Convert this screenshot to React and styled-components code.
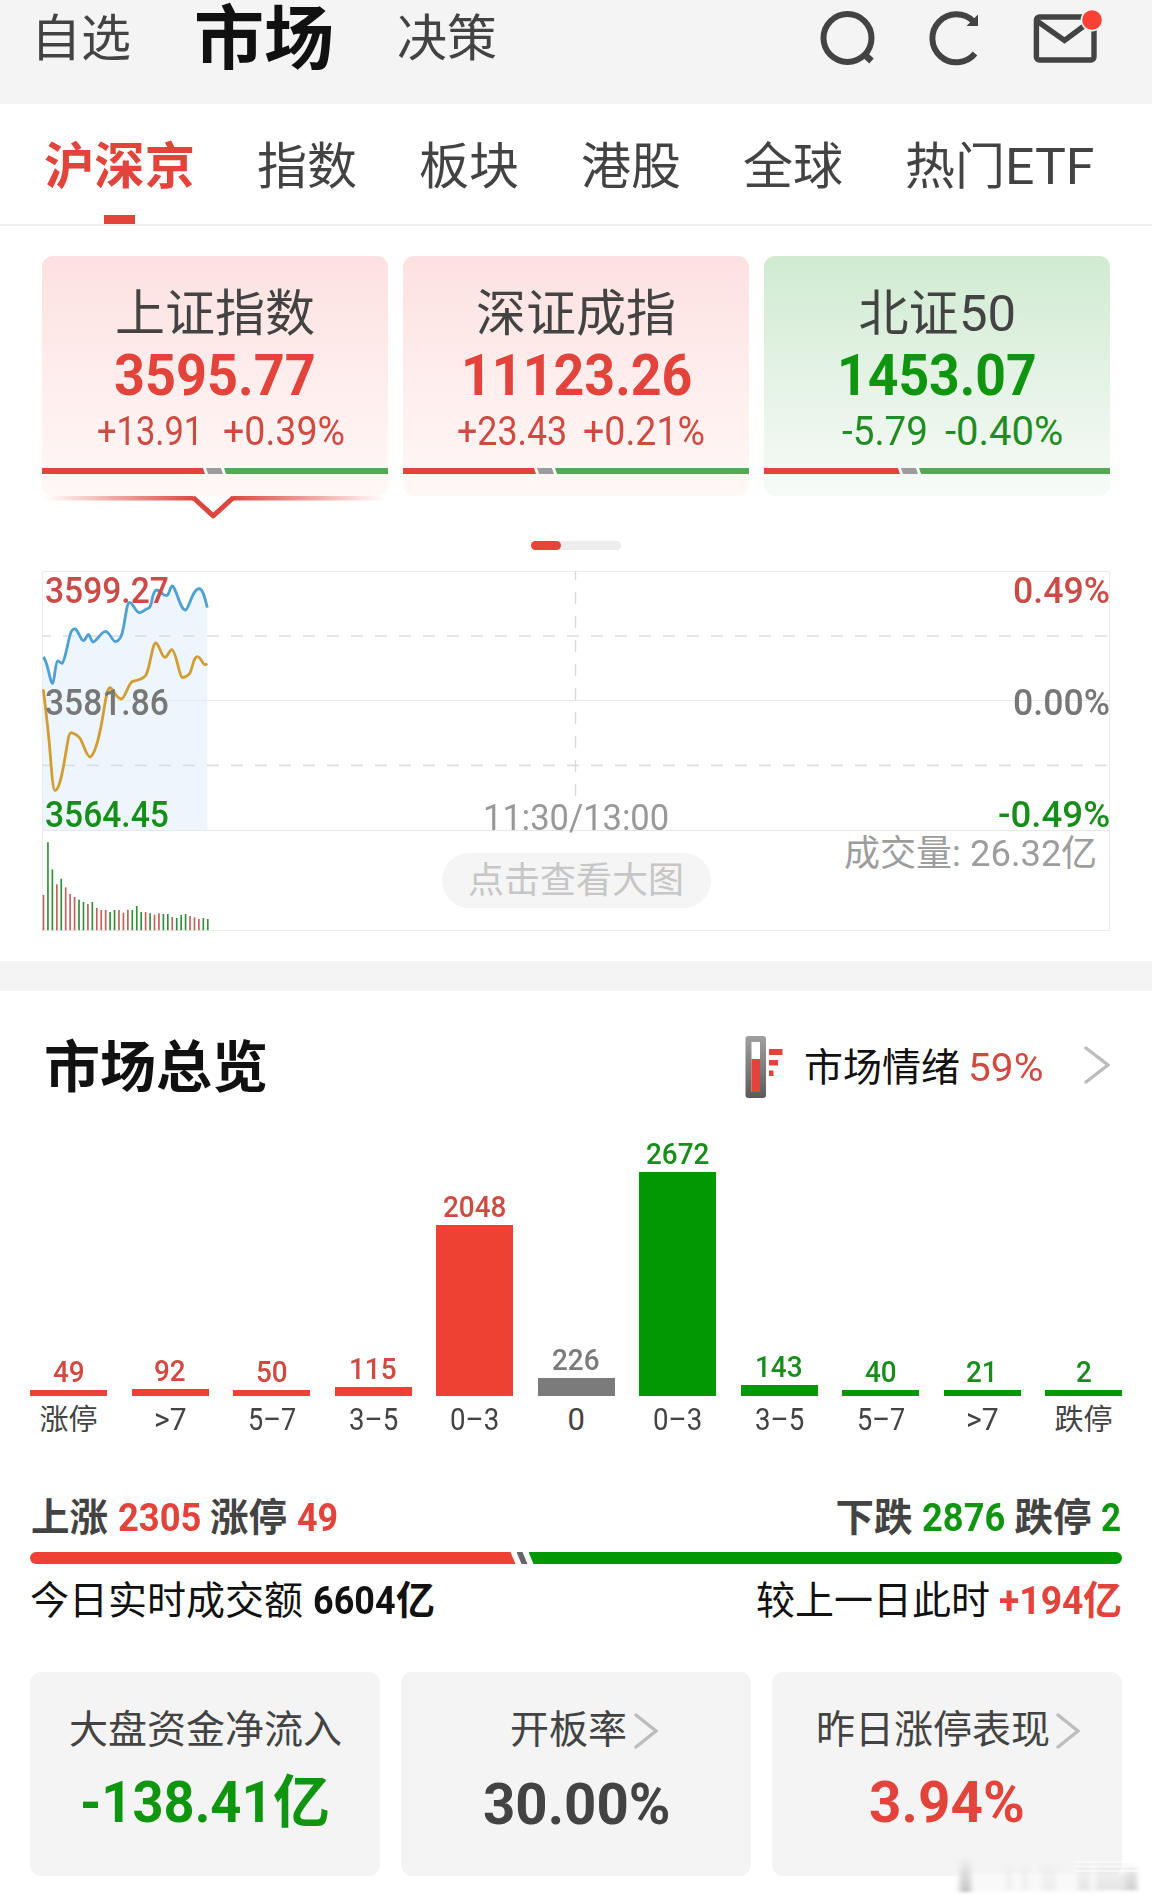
import React, { useLayoutEffect, useRef, useState } from "react";
import styled, { createGlobalStyle } from "styled-components";

const RED = "#e2433a";
const GREEN = "#0f950f";
const INK = "#434343";

const GlobalStyle = createGlobalStyle`
  body { margin: 0; background: #fff; }
  #root { width: 1152px; }
`;

const Page = styled.div`
  width: 1152px;
  height: 1904px;
  overflow: hidden;
  background: #fff;
  color: ${INK};
  font-family: Roboto, "Noto Sans CJK SC", sans-serif;
  white-space: nowrap;
`;

/* ---------- condensed text ---------- */
const FitBox = styled.span`
  display: inline-block;
  flex: none;
  width: ${(p) => p.$w}px;
  color: ${(p) => p.$color || "inherit"};
`;
const FitInner = styled.span`
  display: inline-block;
  transform-origin: 0 50%;
`;
function Fit({ w, color, children }) {
  const ref = useRef(null);
  const [k, setK] = useState(1);
  useLayoutEffect(() => {
    setK(w / ref.current.offsetWidth);
  }, [w, children]);
  return (
    <FitBox $w={w} $color={color}>
      <FitInner ref={ref} style={{ transform: `scaleX(${k})` }}>
        {children}
      </FitInner>
    </FitBox>
  );
}

/* ---------- header ---------- */
const Header = styled.header`
  display: flex;
  justify-content: space-between;
  height: 104px;
  padding: 0 48px 0 31px;
  box-sizing: border-box;
  background: #f4f4f4;
`;
const HeaderNav = styled.nav`
  display: flex;
  gap: 63px;
  height: 78px;
  line-height: 79px;
`;
const HeaderItem = styled.span`
  font-size: ${(p) => (p.$active ? 70 : 50)}px;
  font-weight: ${(p) => (p.$active ? 700 : 400)};
  color: ${(p) => (p.$active ? "#111" : INK)};
  padding-top: ${(p) => (p.$active ? 1 : 0)}px;
`;
const HeaderIcons = styled.div`
  display: flex;
  gap: 50px;
`;

/* ---------- tabs ---------- */
const Tabs = styled.nav`
  display: flex;
  gap: 62px;
  height: 122px;
  box-sizing: border-box;
  padding-left: 44px;
  border-bottom: 2px solid #eee;
`;
const Tab = styled.div`
  display: flex;
  flex-direction: column;
  align-items: center;
  justify-content: space-between;
  font-size: 50px;
  line-height: 127px;
  height: 120px;
  font-weight: ${(p) => (p.$active ? 700 : 400)};
  color: ${(p) => (p.$active ? RED : INK)};
`;
const TabText = styled.span`
  height: 111px;
`;
const Underline = styled.i`
  width: 31px;
  height: 9px;
  background: ${RED};
`;

/* ---------- index cards ---------- */
const IndexSection = styled.section`
  padding: 30px 42px 30px;
`;
const CardRow = styled.div`
  display: grid;
  grid-template-columns: repeat(3, 346px);
  gap: 15px;
`;
const Card = styled.article`
  height: 240px;
  box-sizing: border-box;
  padding-top: 25px;
  border-radius: 11px;
  text-align: center;
  background: ${(p) =>
    p.$up
      ? "linear-gradient(#fde1e1, #fff0ef 62%, #fff8f6)"
      : "linear-gradient(#d0ebd2, #ebf5eb 66%, #f6fbf7)"};
`;
const CardTitle = styled.div`
  font-size: 50px;
  line-height: 67px;
`;
const CardValue = styled.div`
  font-size: 57px;
  font-weight: 700;
  line-height: 56px;
  color: ${(p) => (p.$up ? RED : GREEN)};
`;
const CardChange = styled.div`
  display: flex;
  justify-content: flex-end;
  height: 55px;
  gap: ${(p) => p.$gap}px;
  padding: 0 ${(p) => p.$right}px 0 0;
  font-size: 40px;
  line-height: 56px;
  color: ${(p) => (p.$up ? "#cf4b42" : "#1f8d22")};
`;
const Strip = styled.div`
  display: flex;
  gap: 1px;
  height: 6px;
  margin-top: 9px;
  background: #fff;
`;
const Seg = styled.i`
  width: ${(p) => (p.$w ? `${p.$w}px` : "auto")};
  flex: ${(p) => (p.$w ? "none" : 1)};
  background: ${(p) => p.$c};
  clip-path: polygon(
    0 0,
    calc(100% - ${(p) => p.$r || 0}px) 0,
    100% 100%,
    ${(p) => p.$l || 0}px 100%
  );
  border-radius: ${(p) => p.$radius || 0};
`;
const Pointer = styled.svg`
  display: block;
`;
const Pager = styled.div`
  width: 90px;
  height: 9px;
  margin: 21px auto;
  border-radius: 5px;
  background: #ededed;
`;
const PagerThumb = styled.div`
  width: 30px;
  height: 9px;
  border-radius: 5px;
  background: #e8443a;
`;

/* ---------- intraday chart ---------- */
const Chart = styled.div`
  display: grid;
  width: 1068px;
  height: 360px;
  > * { grid-area: 1 / 1; }
`;
const PriceLabels = styled.div`
  display: grid;
  grid-template-columns: 1fr auto 1fr;
  grid-template-rows: 38px 74px 38px 74px 38px;
  margin-top: 1px;
  font-size: 36px;
  line-height: 38px;
  height: 262px;
`;
const PriceLabel = styled.span`
  grid-row: ${(p) => p.$row};
  grid-column: ${(p) => p.$col};
  justify-self: ${(p) => (p.$col === 3 ? "end" : "start")};
  padding-left: ${(p) => (p.$col === 1 ? 3 : 0)}px;
  color: ${(p) => p.$c};
  font-weight: ${(p) => (p.$light ? 400 : 500)};
  padding-top: ${(p) => (p.$light ? 3 : 0)}px;
`;
const VolumeLabels = styled.div`
  display: grid;
  grid-template-columns: 1fr auto 1fr;
  align-items: start;
  align-self: end;
  height: 101px;
  font-size: 36px;
`;
const ZoomButton = styled.button`
  grid-column: 2;
  width: 269px;
  height: 55px;
  margin-top: 23px;
  padding: 1px 0 0;
  border: 0;
  border-radius: 28px;
  background: #f5f5f5;
  color: #c6c6c6;
  font: 400 36px/52px Roboto, "Noto Sans CJK SC", sans-serif;
`;
const VolumeText = styled.span`
  grid-column: 3;
  justify-self: end;
  padding-right: 13px;
  line-height: 48px;
  color: #9d9d9d;
`;

/* ---------- overview ---------- */
const Band = styled.div`
  height: 30px;
  background: #f4f4f4;
`;
const OverviewHead = styled.div`
  display: flex;
  align-items: center;
  justify-content: space-between;
  height: 79px;
  padding: 38px 42px 0 44px;
  line-height: 79px;
`;
const OverviewTitle = styled.h2`
  margin: 0;
  font-size: 56px;
  font-weight: 700;
  color: #111;
`;
const Mood = styled.div`
  display: flex;
  align-items: center;
  font-size: 39px;
  color: #111;
`;
const MoodText = styled.span`
  margin: 0 8px 0 21px;
`;
const Thermo = styled.svg`
  margin-bottom: 4px;
`;
const Chevron = styled.svg`
  margin-left: ${(p) => p.$ml}px;
  margin-bottom: ${(p) => p.$mb || 0}px;
  fill: none;
  stroke: #bcbcbc;
  stroke-width: 3.4;
  stroke-linecap: round;
`;
const Histogram = styled.div`
  display: grid;
  grid-template-columns: repeat(11, 77px);
  justify-content: space-between;
  padding: 0 30px;
`;
const Column = styled.div`
  display: flex;
  flex-direction: column;
  align-items: center;
  justify-content: flex-end;
  height: 334px;
`;
const ColumnValue = styled.div`
  font-size: 30px;
  font-weight: 500;
  line-height: 36px;
  color: ${(p) => p.$c};
`;
const ColumnBar = styled.div`
  width: 77px;
  background: ${(p) => p.$c};
`;
const ColumnName = styled.div`
  height: 46px;
  line-height: 48px;
  font-size: ${(p) => (p.$cjk ? 29 : 31)}px;
`;

/* ---------- summary ---------- */
const SummaryRow = styled.div`
  display: flex;
  justify-content: space-between;
  margin-top: ${(p) => p.$mt || 0}px;
  padding: ${(p) => (p.$bold ? "0 31px" : "0 30px")};
  height: ${(p) => p.$h}px;
  line-height: ${(p) => p.$h}px;
  font-size: ${(p) => (p.$bold ? 38.5 : 39)}px;
  font-weight: ${(p) => (p.$bold ? 700 : 400)};
  color: ${(p) => (p.$bold ? INK : "#111")};
`;
const Phrase = styled.div`
  display: flex;
  gap: ${(p) => p.$gap}px;
`;
const Strong = styled.b`
  font-weight: 700;
  color: ${(p) => p.$c || "inherit"};
`;
const BreadthBar = styled.div`
  display: flex;
  gap: 1px;
  height: 12px;
  margin: 4px 30px 0;
`;

const StatRow = styled.div`
  display: grid;
  grid-template-columns: repeat(3, 350px);
  justify-content: space-between;
  margin-top: 33px;
  padding: 0 30px;
`;
const Stat = styled.div`
  height: 204px;
  box-sizing: border-box;
  padding-top: 26px;
  border-radius: 11px;
  background: #f4f4f4;
  text-align: center;
`;
const StatName = styled.div`
  display: flex;
  align-items: center;
  justify-content: center;
  padding-left: ${(p) => p.$shift || 0}px;
  font-size: 39px;
  line-height: 65px;
`;
const StatValue = styled.div`
  font-size: 57px;
  font-weight: 700;
  line-height: 80px;
  padding-top: ${(p) => p.$drop || 0}px;
  color: ${(p) => p.$c};
`;
const Watermark = styled.svg`
  display: block;
  position: relative;
  margin: -26px 0 0 940px;
`;

/* ---------- data ---------- */
const indices = [
  { name: "上证指数", value: "3595.77", vw: 202, diff: "+13.91", dw: 106, pct: "+0.39%", pw: 122, up: true, right: 43, gap: 20, red: 163, grey: 17 },
  { name: "深证成指", value: "11123.26", vw: 231, diff: "+23.43", dw: 110, pct: "+0.21%", pw: 122, up: true, right: 44, gap: 16, red: 133, grey: 17 },
  { name: "北证50", value: "1453.07", vw: 200, diff: "-5.79", dw: 86, pct: "-0.40%", pw: 118, up: false, right: 47, gap: 17, red: 136, grey: 17 },
];

const volume = [
  [1005, 0], [847, 1], [928, 1], [973, 0], [956, 1], [982, 0], [1002, 0], [1011, 0],
  [1019, 1], [1026, 1], [1032, 0], [1026, 1], [1044, 0], [1050, 0], [1050, 0], [1056, 1],
  [1050, 1], [1050, 0], [1058, 0], [1049, 0], [1050, 1], [1038, 1], [1056, 1], [1056, 0],
  [1060, 1], [1064, 0], [1060, 0], [1062, 1], [1062, 1], [1071, 0], [1074, 1], [1065, 1],
  [1062, 1], [1068, 0], [1072, 0], [1077, 0], [1074, 1], [1077, 1],
];

const BAR_RED = "#ee4134";
const BAR_GREEN = "#019801";
const columns = [
  { n: 49, name: "涨停", c: BAR_RED, t: "#d04a40" },
  { n: 92, name: ">7", nw: 33, c: BAR_RED, t: "#d04a40" },
  { n: 50, name: "5–7", nw: 48, c: BAR_RED, t: "#d04a40" },
  { n: 115, name: "3–5", nw: 49, c: BAR_RED, t: "#d04a40" },
  { n: 2048, name: "0–3", nw: 49, c: BAR_RED, t: "#d04a40" },
  { n: 226, name: "0", nw: 17, c: "#7b7b7b", t: "#7b7b7b" },
  { n: 2672, name: "0–3", nw: 49, c: BAR_GREEN, t: "#178d1a" },
  { n: 143, name: "3–5", nw: 49, c: BAR_GREEN, t: "#178d1a" },
  { n: 40, name: "5–7", nw: 48, c: BAR_GREEN, t: "#178d1a" },
  { n: 21, name: ">7", nw: 33, c: BAR_GREEN, t: "#178d1a" },
  { n: 2, name: "跌停", c: BAR_GREEN, t: "#178d1a" },
];
const barHeight = (n) => Math.max(6, Math.floor(n * 0.0839));

const BLUE_LINE =
  "M40 291 C48 300 52 318 56 335 C60 352 64 370 68 370 C73 368 76 304 83 303 C88 302 92 311 96 310 C104 306 112 255 120 225 C124 212 130 206 135 207 C144 209 152 241 160 242 C167 242 170 223 175 223 C180 223 184 247 190 246 C202 242 214 214 227 214 C240 216 246 245 257 245 C268 244 276 226 280 205 C287 170 290 128 299 127 C308 128 318 158 328 158 C338 158 340 151 350 147 C360 144 361 140 364 128 C368 106 373 90 380 90 C392 91 396 106 410 107 C418 106 420 78 427 78 C438 80 450 150 466 150 C478 148 486 86 508 86 C520 88 526 120 532 143";
const GOLD_LINE =
  "M40 388 C46 440 52 488 58 550 C64 620 68 692 75 692 C90 690 100 620 106 588 C112 552 116 517 124 518 C134 521 144 526 152 538 C160 552 170 591 180 591 C196 586 212 510 220 460 C228 410 232 384 240 383 C250 386 258 417 274 417 C286 415 294 370 308 364 C322 360 334 360 346 348 C360 330 366 250 377 249 C388 250 394 292 405 292 C414 291 418 268 426 269 C438 272 448 353 458 353 C464 352 472 348 478 342 C488 326 490 290 502 290 C514 291 518 316 526 314 L532 311";

function IntradayDrawing() {
  return (
    <svg width="1068" height="360" viewBox="36 33 3204 1080" fill="none">
      <path d={`${BLUE_LINE} L532 810 L37.5 810 L37.5 291Z`} fill="#eef6fd" />
      <path d="M37.5 34.5H3238.5V1111.5H37.5Z" stroke="#ececec" strokeWidth="3" />
      <path d="M37.5 421.5H3238.5M37.5 811.5H3238.5" stroke="#e8e8ea" strokeWidth="3" />
      <path
        d="M27 228H3236M27 616H3236"
        stroke="#dcdfe1"
        strokeWidth="5"
        strokeDasharray="36 36"
      />
      <path d="M1636.5 24V708" stroke="#d9d9d9" strokeWidth="4" strokeDasharray="36 36" />
      <path d={BLUE_LINE} stroke="#4fa0d3" strokeWidth="8.5" strokeLinejoin="round" />
      <path d={GOLD_LINE} stroke="#d39d36" strokeWidth="8.5" strokeLinejoin="round" />
      {volume.map(([top, green], i) => (
        <path
          key={i}
          d={`M${40.5 + i * 13.32} ${top}V1111`}
          stroke={green ? "#2f8f37" : "#c4605a"}
          strokeWidth="5"
        />
      ))}
    </svg>
  );
}

function SearchIcon() {
  return (
    <svg width="60" height="78" fill="none" stroke={INK} strokeWidth="6">
      <circle cx="29.5" cy="38" r="24" />
      <path d="M46.5 54.5L53.5 61" strokeWidth="6.5" />
    </svg>
  );
}
function RefreshIcon() {
  return (
    <svg width="54" height="78" fill="none" stroke={INK} strokeWidth="6">
      <path d="M47 53.5A24 24 0 1 1 45.5 21.5" />
      <path d="M50 14.5L50 26L38.5 26Z" fill={INK} stroke="none" />
    </svg>
  );
}
function MailIcon() {
  return (
    <svg width="72" height="78" fill="none" stroke={INK} strokeWidth="5.4">
      <rect x="4.4" y="17" width="57.6" height="43" rx="3" />
      <path d="M5 21L32.5 40.5L60 20" />
      <circle cx="60" cy="20" r="11.4" fill="#f4f4f4" stroke="none" />
      <circle cx="60" cy="20" r="9.8" fill="#fb4036" stroke="none" />
    </svg>
  );
}
function ThermoIcon() {
  return (
    <Thermo width="38" height="62">
      <defs>
        <linearGradient id="tube" x1="0" y1="0" x2="0" y2="1">
          <stop offset="0" stopColor="#a0a0a0" />
          <stop offset="1" stopColor="#5b5b5b" />
        </linearGradient>
      </defs>
      <rect x="0.5" y="0" width="20.5" height="62" rx="3" fill="url(#tube)" />
      <rect x="6.5" y="6" width="8.5" height="50" fill="#fff" />
      <rect x="6.5" y="23" width="8.5" height="33" fill="#e2433a" />
      <path d="M24 13H37.5V19H24ZM24 24H33V29.5H24ZM24 34.5H28.5V40H24Z" fill="#e2433a" />
    </Thermo>
  );
}
function ArrowRight({ w, h, ml, mb }) {
  return (
    <Chevron $ml={ml} $mb={mb} width={w} height={h}>
      <path d={`M2 2L${w - 2} ${h / 2}L2 ${h - 2}`} />
    </Chevron>
  );
}

export default function App() {
  return (
    <Page>
      <GlobalStyle />
      <Header>
        <HeaderNav>
          <HeaderItem>自选</HeaderItem>
          <HeaderItem $active>市场</HeaderItem>
          <HeaderItem>决策</HeaderItem>
        </HeaderNav>
        <HeaderIcons>
          <SearchIcon />
          <RefreshIcon />
          <MailIcon />
        </HeaderIcons>
      </Header>

      <Tabs>
        <Tab $active>
          <TabText>
            <Fit w={151}>沪深京</Fit>
          </TabText>
          <Underline />
        </Tab>
        {["指数", "板块", "港股", "全球"].map((t) => (
          <Tab key={t}>
            <TabText>{t}</TabText>
          </Tab>
        ))}
        <Tab>
          <TabText>
            热门<Fit w={89}>ETF</Fit>
          </TabText>
        </Tab>
      </Tabs>

      <IndexSection>
        <CardRow>
          {indices.map((x) => (
            <Card key={x.name} $up={x.up}>
              <CardTitle>
                {x.name.replace("50", "")}
                {x.name.endsWith("50") && <Fit w={57}>50</Fit>}
              </CardTitle>
              <CardValue $up={x.up}>
                <Fit w={x.vw}>{x.value}</Fit>
              </CardValue>
              <CardChange $up={x.up} $right={x.right} $gap={x.gap}>
                <Fit w={x.dw}>{x.diff}</Fit>
                <Fit w={x.pw}>{x.pct}</Fit>
              </CardChange>
              <Strip>
                <Seg $w={x.red} $r={2} $c={RED} />
                <Seg $w={x.grey} $r={2} $l={2} $c="#9c9c9e" />
                <Seg $l={2} $c="#54a957" />
              </Strip>
            </Card>
          ))}
        </CardRow>
        <Pointer width="346" height="24" fill="none">
          <defs>
            <linearGradient id="fadeL">
              <stop offset="0" stopColor="#e2433a" stopOpacity="0" />
              <stop offset="1" stopColor="#d8483f" />
            </linearGradient>
            <linearGradient id="fadeR">
              <stop offset="0" stopColor="#d8483f" />
              <stop offset="1" stopColor="#e2433a" stopOpacity="0" />
            </linearGradient>
          </defs>
          <path d="M2 0H151L154 4.5H2Z" fill="url(#fadeL)" />
          <path d="M344 0H191L188 4.5H344Z" fill="url(#fadeR)" />
          <path d="M151 1.5L171.2 19.8L191.5 1.5" stroke="#dd463d" strokeWidth="5" strokeLinejoin="round" />
        </Pointer>
        <Pager>
          <PagerThumb />
        </Pager>
        <Chart>
          <IntradayDrawing />
          <PriceLabels>
            <PriceLabel $row={1} $col={1} $c="#cb4b47"><Fit w={124}>3599.27</Fit></PriceLabel>
            <PriceLabel $row={3} $col={1} $c="#777"><Fit w={124}>3581.86</Fit></PriceLabel>
            <PriceLabel $row={5} $col={1} $c="#178d1a"><Fit w={124}>3564.45</Fit></PriceLabel>
            <PriceLabel $row={5} $col={2} $c="#999" $light><Fit w={186}>11:30/13:00</Fit></PriceLabel>
            <PriceLabel $row={1} $col={3} $c="#cb4b47"><Fit w={97}>0.49%</Fit></PriceLabel>
            <PriceLabel $row={3} $col={3} $c="#777"><Fit w={97}>0.00%</Fit></PriceLabel>
            <PriceLabel $row={5} $col={3} $c="#178d1a"><Fit w={112}>-0.49%</Fit></PriceLabel>
          </PriceLabels>
          <VolumeLabels>
            <ZoomButton>点击查看大图</ZoomButton>
            <VolumeText>
              成交量<Fit w={18}>:&nbsp;</Fit>
              <Fit w={91}>26.32</Fit>亿
            </VolumeText>
          </VolumeLabels>
        </Chart>
      </IndexSection>

      <Band />

      <OverviewHead>
        <OverviewTitle>市场总览</OverviewTitle>
        <Mood>
          <ThermoIcon />
          <MoodText>市场情绪</MoodText>
          <Fit w={75} color="#d04a40">59%</Fit>
          <ArrowRight w={26} h={38} ml={41} mb={7} />
        </Mood>
      </OverviewHead>

      <Histogram>
        {columns.map((x, i) => (
          <Column key={i}>
            <ColumnValue $c={x.t}>
              <Fit w={String(x.n).length * 15.8}>{x.n}</Fit>
            </ColumnValue>
            <ColumnBar $c={x.c} style={{ height: barHeight(x.n) }} />
            <ColumnName $cjk={!x.nw}>{x.nw ? <Fit w={x.nw}>{x.name}</Fit> : x.name}</ColumnName>
          </Column>
        ))}
      </Histogram>

      <SummaryRow $bold $h={60} $mt={46}>
        <Phrase $gap={9.5}>
          <span>上涨</span>
          <Fit w={83} color={RED}>2305</Fit>
          <span>涨停</span>
          <Fit w={41} color={RED}>49</Fit>
        </Phrase>
        <Phrase $gap={9.5}>
          <span>下跌</span>
          <Fit w={83} color={GREEN}>2876</Fit>
          <span>跌停</span>
          <Fit w={20} color={GREEN}>2</Fit>
        </Phrase>
      </SummaryRow>
      <BreadthBar>
        <Seg $w={485.5} $r={5} $c={BAR_RED} $radius="6px 0 0 6px" />
        <Seg $w={11} $r={5} $l={5} $c="#666" />
        <Seg $l={5} $c={BAR_GREEN} $radius="0 6px 6px 0" />
      </BreadthBar>
      <SummaryRow $h={75}>
        <Phrase $gap={10}>
          <span>今日实时成交额</span>
          <Strong>
            <Fit w={83}>6604</Fit>亿
          </Strong>
        </Phrase>
        <Phrase $gap={9}>
          <span>较上一日此时</span>
          <Strong $c={RED}>
            <Fit w={84}>+194</Fit>亿
          </Strong>
        </Phrase>
      </SummaryRow>

      <StatRow>
        <Stat>
          <StatName $shift={1}>大盘资金净流入</StatName>
          <StatValue $c={GREEN}>
            <Fit w={193}>-138.41</Fit>亿
          </StatValue>
        </Stat>
        <Stat>
          <StatName $shift={16}>
            开板率
            <ArrowRight w={24} h={36} ml={7} />
          </StatName>
          <StatValue $c={INK} $drop={2}>
            <Fit w={187}>30.00%</Fit>
          </StatValue>
        </Stat>
        <Stat>
          <StatName $shift={2}>
            昨日涨停表现
            <ArrowRight w={24} h={36} ml={6} />
          </StatName>
          <StatValue $c={RED}>
            <Fit w={156}>3.94%</Fit>
          </StatValue>
        </Stat>
      </StatRow>
      <Watermark width="212" height="54">
        <defs>
          <filter id="soft">
            <feGaussianBlur stdDeviation="2.6 1.6" />
          </filter>
          <linearGradient id="smoke" gradientUnits="userSpaceOnUse" x1="0" y1="6" x2="0" y2="44">
            <stop offset="0" stopColor="#888" stopOpacity="0" />
            <stop offset="1" stopColor="#888" stopOpacity="0.5" />
          </linearGradient>
        </defs>
        <path d="M16 24H198V42H16Z" fill="#f9f9f9" filter="url(#soft)" />
        <g filter="url(#soft)" fill="url(#smoke)">
          <path d="M20 6H31V42H20Z" />
          <path d="M66 14H72V40H66ZM82 14H88V40H82ZM102 14H116V40H102Z" opacity="0.25" />
          <path d="M138 14H150V40H138ZM156 14H197V40H156Z" opacity="0.4" />
          <path d="M186 16H197V40H186Z" opacity="0.5" />
        </g>
        <path d="M134 12H198M134 16.5H200M134 21H200" stroke="#fff" strokeWidth="1.6" opacity="0.7" />
      </Watermark>
    </Page>
  );
}
